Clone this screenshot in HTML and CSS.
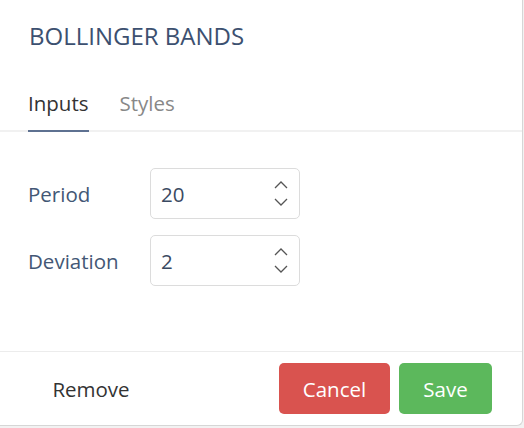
FILE: index.html
```html
<!DOCTYPE html>
<html>
<head>
<meta charset="utf-8">
<link rel="stylesheet" href="styles.css">
</head>
<body>
<div class="dialog">
  <div class="header">
    <h1 class="title">BOLLINGER BANDS</h1>
  </div>
  <div class="tabs">
    <div class="tab active">Inputs</div>
    <div class="tab">Styles</div>
  </div>
  <div class="body">
    <div class="row">
      <label class="label">Period</label>
      <div class="field">
        <span class="value">20</span>
        <span class="spin">
          <svg width="14" height="8" viewBox="0 0 14 8"><path d="M1 7 L7 1 L13 7" fill="none" stroke="#555" stroke-width="1.3"/></svg>
          <svg width="14" height="8" viewBox="0 0 14 8"><path d="M1 1 L7 7 L13 1" fill="none" stroke="#555" stroke-width="1.3"/></svg>
        </span>
      </div>
    </div>
    <div class="row">
      <label class="label">Deviation</label>
      <div class="field">
        <span class="value">2</span>
        <span class="spin">
          <svg width="14" height="8" viewBox="0 0 14 8"><path d="M1 7 L7 1 L13 7" fill="none" stroke="#555" stroke-width="1.3"/></svg>
          <svg width="14" height="8" viewBox="0 0 14 8"><path d="M1 1 L7 7 L13 1" fill="none" stroke="#555" stroke-width="1.3"/></svg>
        </span>
      </div>
    </div>
  </div>
  <div class="footer">
    <button class="btn link">Remove</button>
    <div class="spacer"></div>
    <button class="btn cancel">Cancel</button>
    <button class="btn save">Save</button>
  </div>
</div>
</body>
</html>
```
FILE: styles.css
```css
html, body {
  margin: 0;
  padding: 0;
}
body {
  background: #f2f2f2;
  font-family: "Open Sans", "Noto Sans", sans-serif;
  width: 524px;
  height: 428px;
  overflow: hidden;
}
.dialog {
  width: 523px;
  height: 426px;
  background: #fff;
  border-right: 1px solid #d6d6d6;
  border-bottom: 1px solid #d6d6d6;
  border-bottom-right-radius: 6px;
  display: flex;
  flex-direction: column;
  box-sizing: border-box;
}
.header {
  padding: 20px 29px 0;
}
.title {
  margin: 0;
  font-size: 24px;
  font-weight: 400;
  line-height: 32px;
  color: #3c5070;
}
.tabs {
  display: flex;
  gap: 31px;
  padding: 0 28px;
  margin-top: 37px;
  border-bottom: 2px solid #f1f1f1;
}
.tab {
  font-size: 20.5px;
  line-height: 28px;
  padding: 0 0 13px;
  color: #888;
}
.tab.active {
  color: #333;
  border-bottom: 2px solid #5e7191;
  margin-bottom: -2px;
}
.body {
  flex: 1;
  padding: 36px 28px 0;
  display: flex;
  flex-direction: column;
  gap: 16px;
}
.row {
  display: flex;
  align-items: center;
}
.label {
  width: 122px;
  font-size: 20.5px;
  color: #435775;
}
.field {
  width: 150px;
  height: 51px;
  box-sizing: border-box;
  border: 1px solid #dcdcdc;
  border-radius: 5px;
  display: flex;
  align-items: center;
  padding: 0 10px;
}
.value {
  flex: 1;
  font-size: 20.5px;
  color: #3a4a62;
}
.spin {
  display: flex;
  flex-direction: column;
  gap: 9px;
  margin-right: 1px;
}
.spin svg {
  display: block;
}
.footer {
  border-top: 1px solid #ececec;
  height: 74px;
  box-sizing: border-box;
  display: flex;
  align-items: flex-start;
  padding: 11px 30px 0 28px;
}
.spacer {
  flex: 1;
}
.btn {
  font-family: "Open Sans", "Noto Sans", sans-serif;
  font-size: 20.5px;
  height: 51px;
  border: none;
  border-radius: 5px;
  color: #fff;
  padding: 0;
  cursor: pointer;
}
.btn.link {
  background: none;
  color: #333;
  width: 126px;
}
.btn.cancel {
  background: #d9534f;
  width: 111px;
  margin-right: 9px;
}
.btn.save {
  background: #5cb85c;
  width: 93px;
}
```
